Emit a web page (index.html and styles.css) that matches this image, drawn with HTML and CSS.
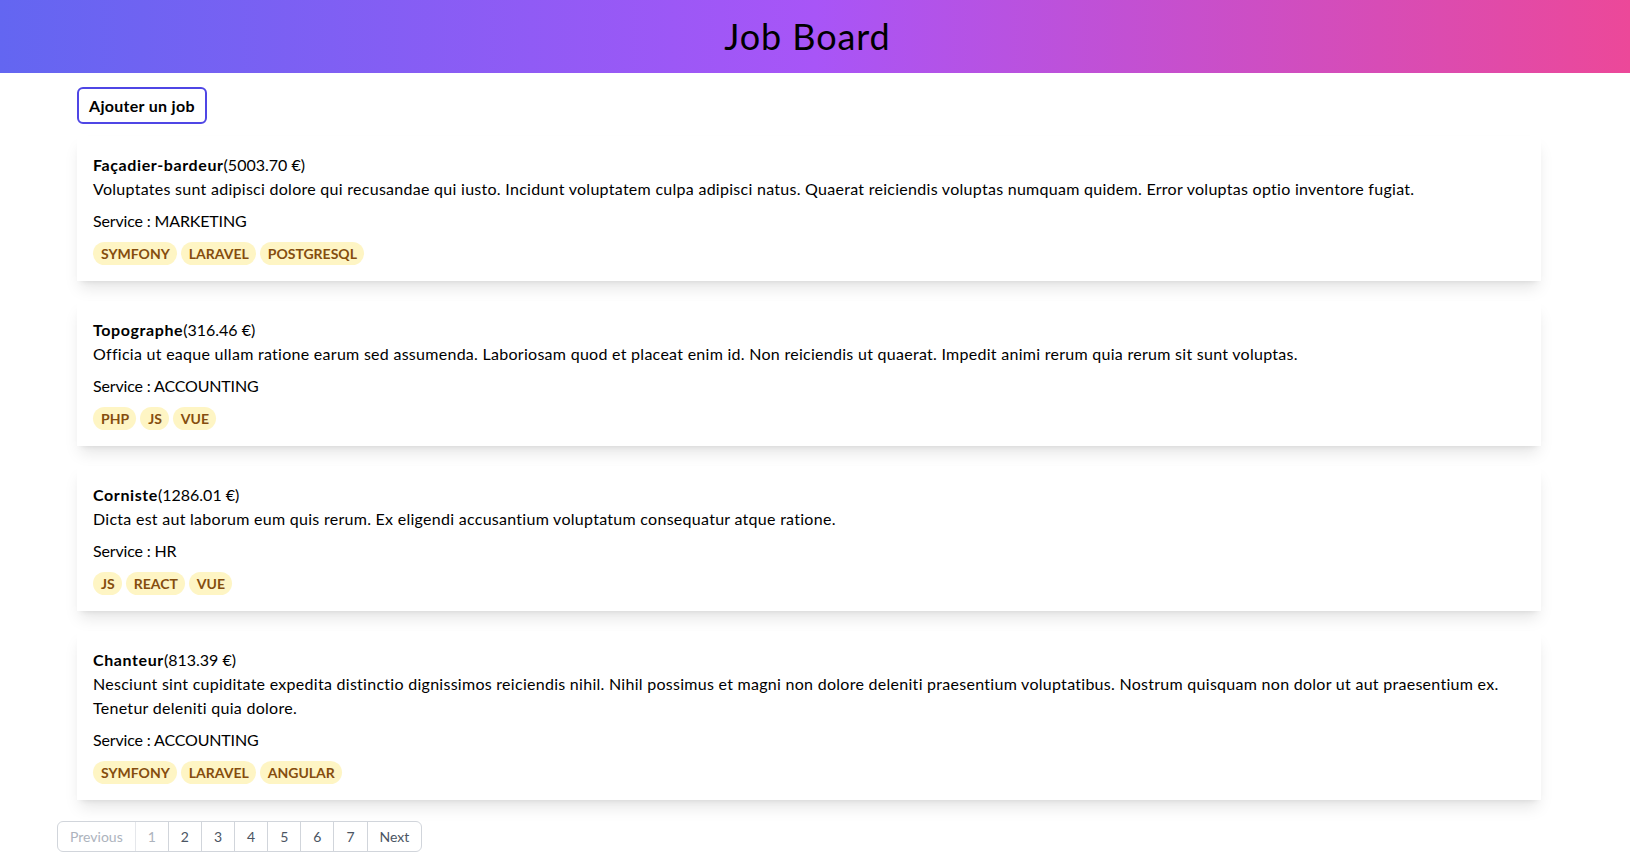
FILE: index.html
```html
<!DOCTYPE html>
<html lang="fr">
<head>
<meta charset="utf-8">
<title>Job Board</title>
<link rel="stylesheet" href="styles.css">
</head>
<body>
<header class="header">
  <h1 class="header-title">Job Board</h1>
</header>
<main class="main">
  <button class="add-btn">Ajouter un job</button>
  <div class="jobs">
    <div class="card">
      <p class="card-title"><strong>Façadier-bardeur</strong>(5003.70 €)</p>
      <p class="card-desc">Voluptates sunt adipisci dolore qui recusandae qui iusto. Incidunt voluptatem culpa adipisci natus. Quaerat reiciendis voluptas numquam quidem. Error voluptas optio inventore fugiat.</p>
      <p class="card-service">Service : MARKETING</p>
      <div class="tags"><span class="tag">SYMFONY</span><span class="tag">LARAVEL</span><span class="tag">POSTGRESQL</span></div>
    </div>
    <div class="card">
      <p class="card-title"><strong>Topographe</strong>(316.46 €)</p>
      <p class="card-desc">Officia ut eaque ullam ratione earum sed assumenda. Laboriosam quod et placeat enim id. Non reiciendis ut quaerat. Impedit animi rerum quia rerum sit sunt voluptas.</p>
      <p class="card-service">Service : ACCOUNTING</p>
      <div class="tags"><span class="tag">PHP</span><span class="tag">JS</span><span class="tag">VUE</span></div>
    </div>
    <div class="card">
      <p class="card-title"><strong>Corniste</strong>(1286.01 €)</p>
      <p class="card-desc">Dicta est aut laborum eum quis rerum. Ex eligendi accusantium voluptatum consequatur atque ratione.</p>
      <p class="card-service">Service : HR</p>
      <div class="tags"><span class="tag">JS</span><span class="tag">REACT</span><span class="tag">VUE</span></div>
    </div>
    <div class="card">
      <p class="card-title"><strong>Chanteur</strong>(813.39 €)</p>
      <p class="card-desc">Nesciunt sint cupiditate expedita distinctio dignissimos reiciendis nihil. Nihil possimus et magni non dolore deleniti praesentium voluptatibus. Nostrum quisquam non dolor ut aut praesentium ex. Tenetur deleniti quia dolore.</p>
      <p class="card-service">Service : ACCOUNTING</p>
      <div class="tags"><span class="tag">SYMFONY</span><span class="tag">LARAVEL</span><span class="tag">ANGULAR</span></div>
    </div>
  </div>
  <nav class="pagination">
    <span class="page disabled">Previous</span>
    <span class="page disabled">1</span>
    <span class="page">2</span>
    <span class="page">3</span>
    <span class="page">4</span>
    <span class="page">5</span>
    <span class="page">6</span>
    <span class="page">7</span>
    <span class="page">Next</span>
  </nav>
</main>
</body>
</html>
```
FILE: styles.css
```css
* { box-sizing: border-box; }
body {
  margin: 0;
  font-family: Lato, "Open Sans", "Noto Sans", sans-serif;
  color: #000;
  background: #fff;
  font-size: 16px;
  line-height: 24px;
}
.header {
  background: linear-gradient(to right, #6366f1, #a855f7, #ec4899);
  padding: 16px 15px 16px 0;
  text-align: center;
}
.header-title {
  margin: 0;
  font-size: 36px;
  line-height: 41px;
  font-weight: 400;
  letter-spacing: 0.9px;
}
.main {
  padding-left: 57px;
}
.add-btn {
  display: block;
  margin: 14px 0 12px 20px;
  padding: 4px 10px;
  border: 2px solid #4f46e5;
  border-radius: 6px;
  background: #fff;
  font-family: inherit;
  font-size: 16px;
  line-height: 25px;
  font-weight: 700;
  letter-spacing: 0.3px;
  color: #000;
}
.jobs {
  margin-left: 20px;
  width: 1464px;
}
.card {
  padding: 17px 16px 16px;
  margin-bottom: 20px;
  background: #fff;
  box-shadow: 0 10px 15px -3px rgba(0,0,0,.1), 0 4px 6px -4px rgba(0,0,0,.1);
}
.card p { margin: 0; }
.card-title strong { letter-spacing: 0.6px; }
.card-desc { letter-spacing: 0.277px; }
.card-service { margin-top: 8px !important; letter-spacing: -0.16px; }
.tags {
  margin-top: 9px;
  display: flex;
  gap: 4px;
}
.tag {
  background: #fef5c4;
  color: #854d0e;
  font-size: 14px;
  font-weight: 700;
  line-height: 19px;
  padding: 2px 7px 2px 8px;
  border-radius: 999px;
}
.pagination {
  display: inline-flex;
  margin-top: 1px;
  border: 1px solid #d1d5db;
  border-radius: 6px;
  overflow: hidden;
}
.page {
  padding: 5px 12px;
  font-size: 14px;
  line-height: 19px;
  color: #4b5563;
  border-left: 1px solid #d1d5db;
}
.page:first-child { border-left: none; }
.page.disabled { color: #adb3bd; border-color: #e5e7eb; }
```
